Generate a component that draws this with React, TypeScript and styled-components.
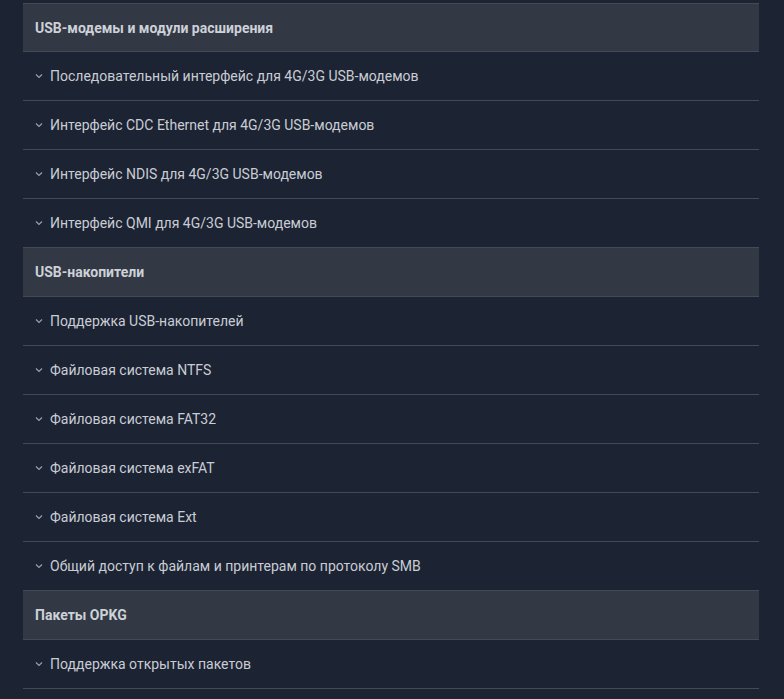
import React from 'react';
import styled, { createGlobalStyle } from 'styled-components';

const GlobalStyle = createGlobalStyle`
  html, body {
    margin: 0;
    padding: 0;
    background: #1c2333;
  }
  body {
    font-family: Roboto, "Liberation Sans", sans-serif;
    -webkit-font-smoothing: antialiased;
  }
`;

/* LIST STYLES */
const Page = styled.div`
  padding: 3px 25px 20px 23px;
  min-height: 699px;
  box-sizing: border-box;
`;

const List = styled.div`
  display: flex;
  flex-direction: column;
  border-top: 1px solid #434a56;
`;

const GroupHeader = styled.div<{ $first?: boolean }>`
  display: flex;
  align-items: center;
  height: ${(p) => (p.$first ? '47px' : '48px')};
  padding: 0 12px;
  background: #323844;
  border-bottom: 1px solid #434a56;
  color: #cdd1d8;
  font-size: 14px;
  font-weight: 700;
`;

const Row = styled.div`
  display: flex;
  align-items: center;
  gap: 7px;
  height: 48px;
  padding: 0 12px;
  border-bottom: 1px solid #434a56;
  color: #c9cdd3;
  font-size: 14px;
  cursor: pointer;
`;

const Chevron = styled.svg`
  width: 8px;
  height: 8px;
  flex-shrink: 0;
  color: #9aa0aa;
`;

type Group = { title: string; items: string[] };

const groups: Group[] = [
  {
    title: 'USB-модемы и модули расширения',
    items: [
      'Последовательный интерфейс для 4G/3G USB-модемов',
      'Интерфейс CDC Ethernet для 4G/3G USB-модемов',
      'Интерфейс NDIS для 4G/3G USB-модемов',
      'Интерфейс QMI для 4G/3G USB-модемов',
    ],
  },
  {
    title: 'USB-накопители',
    items: [
      'Поддержка USB-накопителей',
      'Файловая система NTFS',
      'Файловая система FAT32',
      'Файловая система exFAT',
      'Файловая система Ext',
      'Общий доступ к файлам и принтерам по протоколу SMB',
    ],
  },
  {
    title: 'Пакеты OPKG',
    items: ['Поддержка открытых пакетов'],
  },
];

const App: React.FC = () => (
  <>
    <GlobalStyle />
    <Page>
      <List>
        {groups.map((g, i) => (
          <React.Fragment key={g.title}>
            <GroupHeader $first={i === 0}>{g.title}</GroupHeader>
            {g.items.map((item) => (
              <Row key={item}>
                <Chevron viewBox="0 0 8 8" fill="none">
                  <path d="M1 2.5 L4 5.5 L7 2.5" stroke="currentColor" strokeWidth="1.2" />
                </Chevron>
                {item}
              </Row>
            ))}
          </React.Fragment>
        ))}
      </List>
    </Page>
  </>
);

export default App;
